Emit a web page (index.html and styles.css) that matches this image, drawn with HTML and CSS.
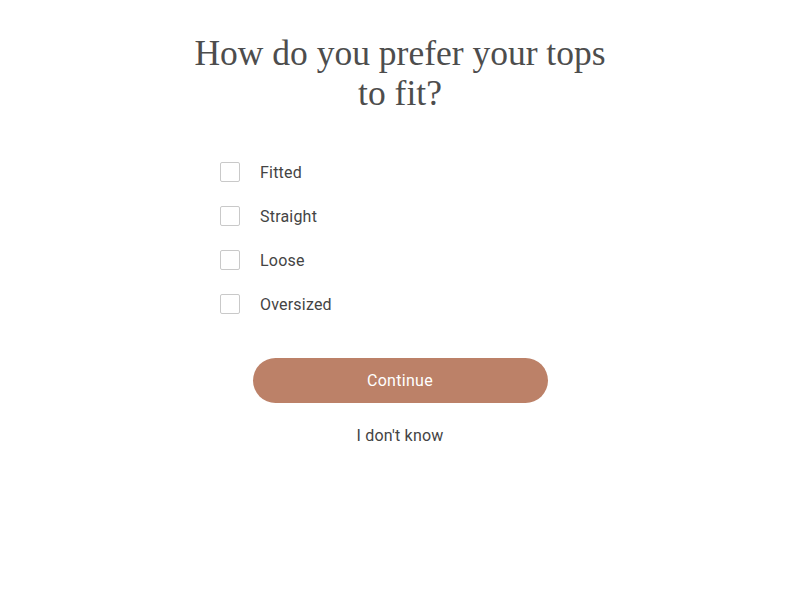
FILE: index.html
```html
<!DOCTYPE html>
<html>
<head>
<meta charset="utf-8">
<link rel="stylesheet" href="styles.css">
</head>
<body>
<main class="quiz">
  <h1 class="title">How do you prefer your tops<br>to fit?</h1>
  <ul class="options">
    <li class="option"><span class="box"></span><span class="label">Fitted</span></li>
    <li class="option"><span class="box"></span><span class="label">Straight</span></li>
    <li class="option"><span class="box"></span><span class="label">Loose</span></li>
    <li class="option"><span class="box"></span><span class="label">Oversized</span></li>
  </ul>
  <button class="continue">Continue</button>
  <a class="skip">I don't know</a>
</main>
</body>
</html>
```
FILE: styles.css
```css
html, body { margin: 0; padding: 0; background: #fff; }
body { font-family: "Roboto", "Liberation Sans", sans-serif; color: #444; }
.quiz { width: 800px; display: flex; flex-direction: column; align-items: center; padding-top: 33px; }
.title {
  margin: 0;
  font-family: "Liberation Serif", serif;
  font-weight: normal;
  font-size: 35.5px;
  line-height: 40px;
  color: #4d4d4d;
  text-align: center;
}
.options { list-style: none; margin: 49px 0 0 0; padding: 0; width: 360px; display: flex; flex-direction: column; gap: 24px; }
.option { display: flex; align-items: center; gap: 20px; height: 20px; }
.box { width: 18px; height: 18px; border: 1px solid #c9c9c9; border-radius: 2px; box-sizing: content-box; }
.label { font-size: 16px; color: #444; letter-spacing: 0.2px; }
.continue {
  margin-top: 44px;
  width: 295px; height: 45px;
  border: none; border-radius: 23px;
  background: #bc8168; color: #fff;
  font-family: "Roboto", "Liberation Sans", sans-serif; font-size: 16px; letter-spacing: 0.3px;
}
.skip { margin-top: 23px; font-size: 16px; color: #444; letter-spacing: 0.2px; line-height: 20px; }
```
